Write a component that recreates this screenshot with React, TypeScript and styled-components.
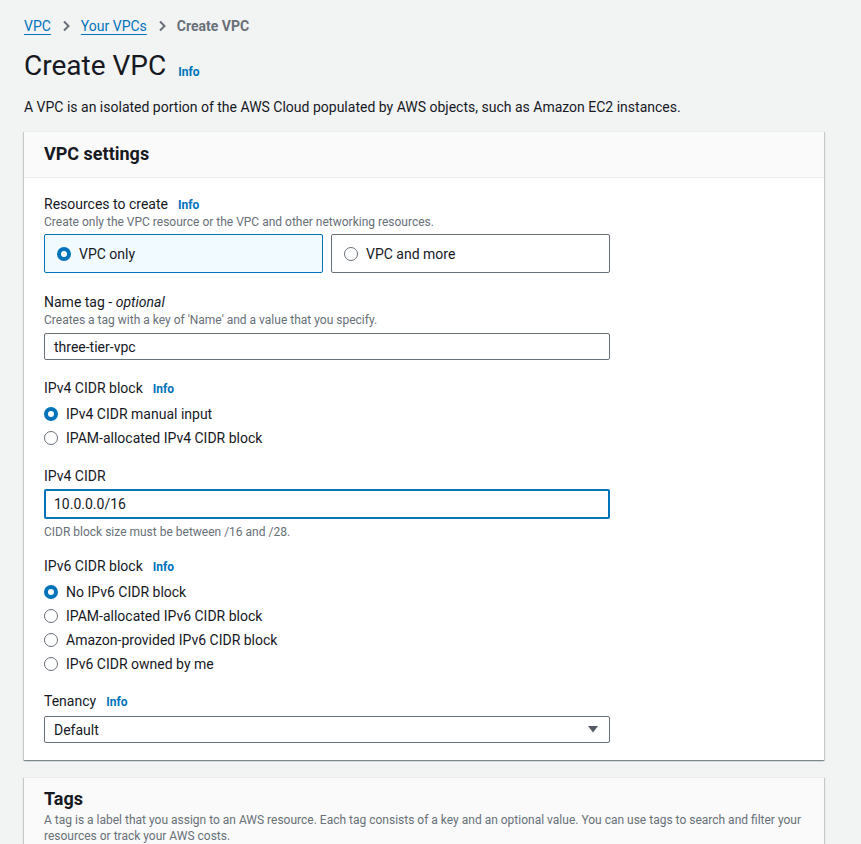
import React from "react";
import styled, { createGlobalStyle } from "styled-components";

const Global = createGlobalStyle`
  html, body { margin: 0; padding: 0; background: #f2f3f3; }
  body { font-family: Roboto, "Liberation Sans", sans-serif; color: #16191f; font-size: 14px; }
  * { box-sizing: border-box; }
`;

const Page = styled.div`
  padding: 16px 37px 0 24px;
  height: 844px;
  overflow: hidden;
`;

const Crumbs = styled.nav`
  display: flex;
  align-items: center;
  gap: 11px;
  height: 20px;
  font-size: 14px;
  line-height: 20px;
`;

const CrumbLink = styled.a`
  color: #0073bb;
  text-decoration: underline;
  text-underline-offset: 3px;
`;

const CrumbCurrent = styled.span`
  color: #687078;
  font-weight: 700;
`;

const Chevron = () => (
  <svg width="8" height="12" viewBox="0 0 8 12">
    <path d="M2 1.5 L6.5 6 L2 10.5" fill="none" stroke="#687078" strokeWidth="2" />
  </svg>
);

const TitleRow = styled.div`
  display: flex;
  align-items: center;
  gap: 12px;
  margin-top: 12px;
  height: 36px;
`;

const H1 = styled.h1`
  margin: 0;
  font-size: 28px;
  line-height: 36px;
  font-weight: 400;
`;

const Info = styled.a<{ $drop?: number }>`
  color: #0073bb;
  font-size: 12px;
  line-height: 16px;
  font-weight: 700;
  text-decoration: none;
  margin-top: ${(p) => p.$drop ?? 0}px;
`;

const Lead = styled.p`
  margin: 12px 0 0;
  font-size: 14px;
  line-height: 22px;
`;

const Card = styled.section<{ $top: number }>`
  width: 800px;
  margin-top: ${(p) => p.$top}px;
  background: #ffffff;
  box-shadow: 0 1px 1px 0 rgba(0, 28, 36, 0.3), 1px 1px 1px 0 rgba(0, 28, 36, 0.15),
    -1px 1px 1px 0 rgba(0, 28, 36, 0.15);
  border-top: 1px solid #eaeded;
`;

const CardHeader = styled.header<{ $plain?: boolean }>`
  background: #fafafa;
  padding: ${(p) => (p.$plain ? "10px 20px 0" : "11px 20px 12px")};
  border-bottom: ${(p) => (p.$plain ? "none" : "1px solid #eaeded")};
`;

const H2 = styled.h2`
  margin: 0;
  font-size: 18px;
  line-height: 22px;
  font-weight: 700;
`;

const HeaderDesc = styled.p`
  margin: 2px 0 0;
  font-size: 12px;
  line-height: 16px;
  color: #687078;
  max-width: 760px;
`;

const CardBody = styled.div`
  padding: 15px 20px 17px;
  display: flex;
  flex-direction: column;
`;

const Field = styled.div<{ $gap: number }>`
  width: 566px;
  margin-top: ${(p) => p.$gap}px;
  display: flex;
  flex-direction: column;
`;

const Label = styled.div`
  display: flex;
  align-items: baseline;
  gap: 10px;
  font-size: 14px;
  line-height: 22px;
  em { font-style: italic; }
`;

const Desc = styled.div`
  margin-top: -1px;
  font-size: 12px;
  line-height: 16px;
  color: #687078;
`;

const Tiles = styled.div`
  display: grid;
  grid-template-columns: 1fr 1fr;
  gap: 8px;
  margin-top: 4px;
`;

const Tile = styled.div<{ $on?: boolean }>`
  height: 39px;
  display: flex;
  align-items: center;
  gap: 8px;
  padding: 0 12px;
  border: 1px solid ${(p) => (p.$on ? "#0073bb" : "#687078")};
  background: ${(p) => (p.$on ? "#f1faff" : "#ffffff")};
  border-radius: 2px;
`;

const RadioDot = styled.span<{ $on?: boolean }>`
  width: 14px;
  height: 14px;
  border-radius: 50%;
  flex: none;
  border: ${(p) => (p.$on ? "4px solid #0073bb" : "1.5px solid #687078")};
  background: #ffffff;
`;

const RadioList = styled.div`
  display: flex;
  flex-direction: column;
  margin-top: 3px;
`;

const RadioRow = styled.div`
  height: 24px;
  display: flex;
  align-items: center;
  gap: 8px;
  font-size: 14px;
`;

const Input = styled.div<{ $focus?: boolean }>`
  margin-top: ${(p) => (p.$focus ? 2 : 5)}px;
  height: ${(p) => (p.$focus ? 30 : 27)}px;
  display: flex;
  align-items: center;
  padding: 0 ${(p) => (p.$focus ? 8 : 9)}px;
  border: ${(p) => (p.$focus ? "2px solid #0073bb" : "1px solid #687078")};
  border-radius: 2px;
  font-size: 14px;
  background: #fff;
`;

const Hint = styled.div`
  margin-top: 5px;
  font-size: 12px;
  line-height: 16px;
  color: #687078;
`;

const Select = styled.div`
  margin-top: 4px;
  height: 27px;
  display: flex;
  align-items: center;
  justify-content: space-between;
  padding: 0 11px 0 9px;
  border: 1px solid #687078;
  border-radius: 2px;
  font-size: 14px;
`;

const Caret = () => (
  <svg width="10" height="7" viewBox="0 0 10 7">
    <path d="M0 0 H10 L5 6.5 Z" fill="#545b64" />
  </svg>
);

const Radio = ({ on, label }: { on?: boolean; label: string }) => (
  <RadioRow>
    <RadioDot $on={on} />
    <span>{label}</span>
  </RadioRow>
);

export default function App() {
  return (
    <>
      <Global />
      <Page>
        <Crumbs>
          <CrumbLink>VPC</CrumbLink>
          <Chevron />
          <CrumbLink>Your VPCs</CrumbLink>
          <Chevron />
          <CrumbCurrent>Create VPC</CrumbCurrent>
        </Crumbs>
        <TitleRow>
          <H1>Create VPC</H1>
          <Info $drop={12}>Info</Info>
        </TitleRow>
        <Lead>
          A VPC is an isolated portion of the AWS Cloud populated by AWS objects, such as Amazon EC2 instances.
        </Lead>
        <Card $top={13}>
          <CardHeader>
            <H2>VPC settings</H2>
          </CardHeader>
          <CardBody>
            <Field $gap={0}>
              <Label>
                <span>Resources to create</span>
                <Info>Info</Info>
              </Label>
              <Desc>Create only the VPC resource or the VPC and other networking resources.</Desc>
              <Tiles>
                <Tile $on>
                  <RadioDot $on />
                  <span>VPC only</span>
                </Tile>
                <Tile>
                  <RadioDot />
                  <span>VPC and more</span>
                </Tile>
              </Tiles>
            </Field>
            <Field $gap={18}>
              <Label>
                <span>
                  Name tag - <em>optional</em>
                </span>
              </Label>
              <Desc>Creates a tag with a key of 'Name' and a value that you specify.</Desc>
              <Input>three-tier-vpc</Input>
            </Field>
            <Field $gap={17}>
              <Label>
                <span>IPv4 CIDR block</span>
                <Info>Info</Info>
              </Label>
              <RadioList>
                <Radio on label="IPv4 CIDR manual input" />
                <Radio label="IPAM-allocated IPv4 CIDR block" />
              </RadioList>
            </Field>
            <Field $gap={15}>
              <Label>
                <span>IPv4 CIDR</span>
              </Label>
              <Input $focus>10.0.0.0/16</Input>
              <Hint>CIDR block size must be between /16 and /28.</Hint>
            </Field>
            <Field $gap={15}>
              <Label>
                <span>IPv6 CIDR block</span>
                <Info>Info</Info>
              </Label>
              <RadioList>
                <Radio on label="No IPv6 CIDR block" />
                <Radio label="IPAM-allocated IPv6 CIDR block" />
                <Radio label="Amazon-provided IPv6 CIDR block" />
                <Radio label="IPv6 CIDR owned by me" />
              </RadioList>
            </Field>
            <Field $gap={14}>
              <Label>
                <span>Tenancy</span>
                <Info>Info</Info>
              </Label>
              <Select>
                <span>Default</span>
                <Caret />
              </Select>
            </Field>
          </CardBody>
        </Card>
        <Card $top={17}>
          <CardHeader $plain>
            <H2>Tags</H2>
            <HeaderDesc>
              A tag is a label that you assign to an AWS resource. Each tag consists of a key and an optional value. You
              can use tags to search and filter your resources or track your AWS costs.
            </HeaderDesc>
          </CardHeader>
        </Card>
      </Page>
    </>
  );
}
